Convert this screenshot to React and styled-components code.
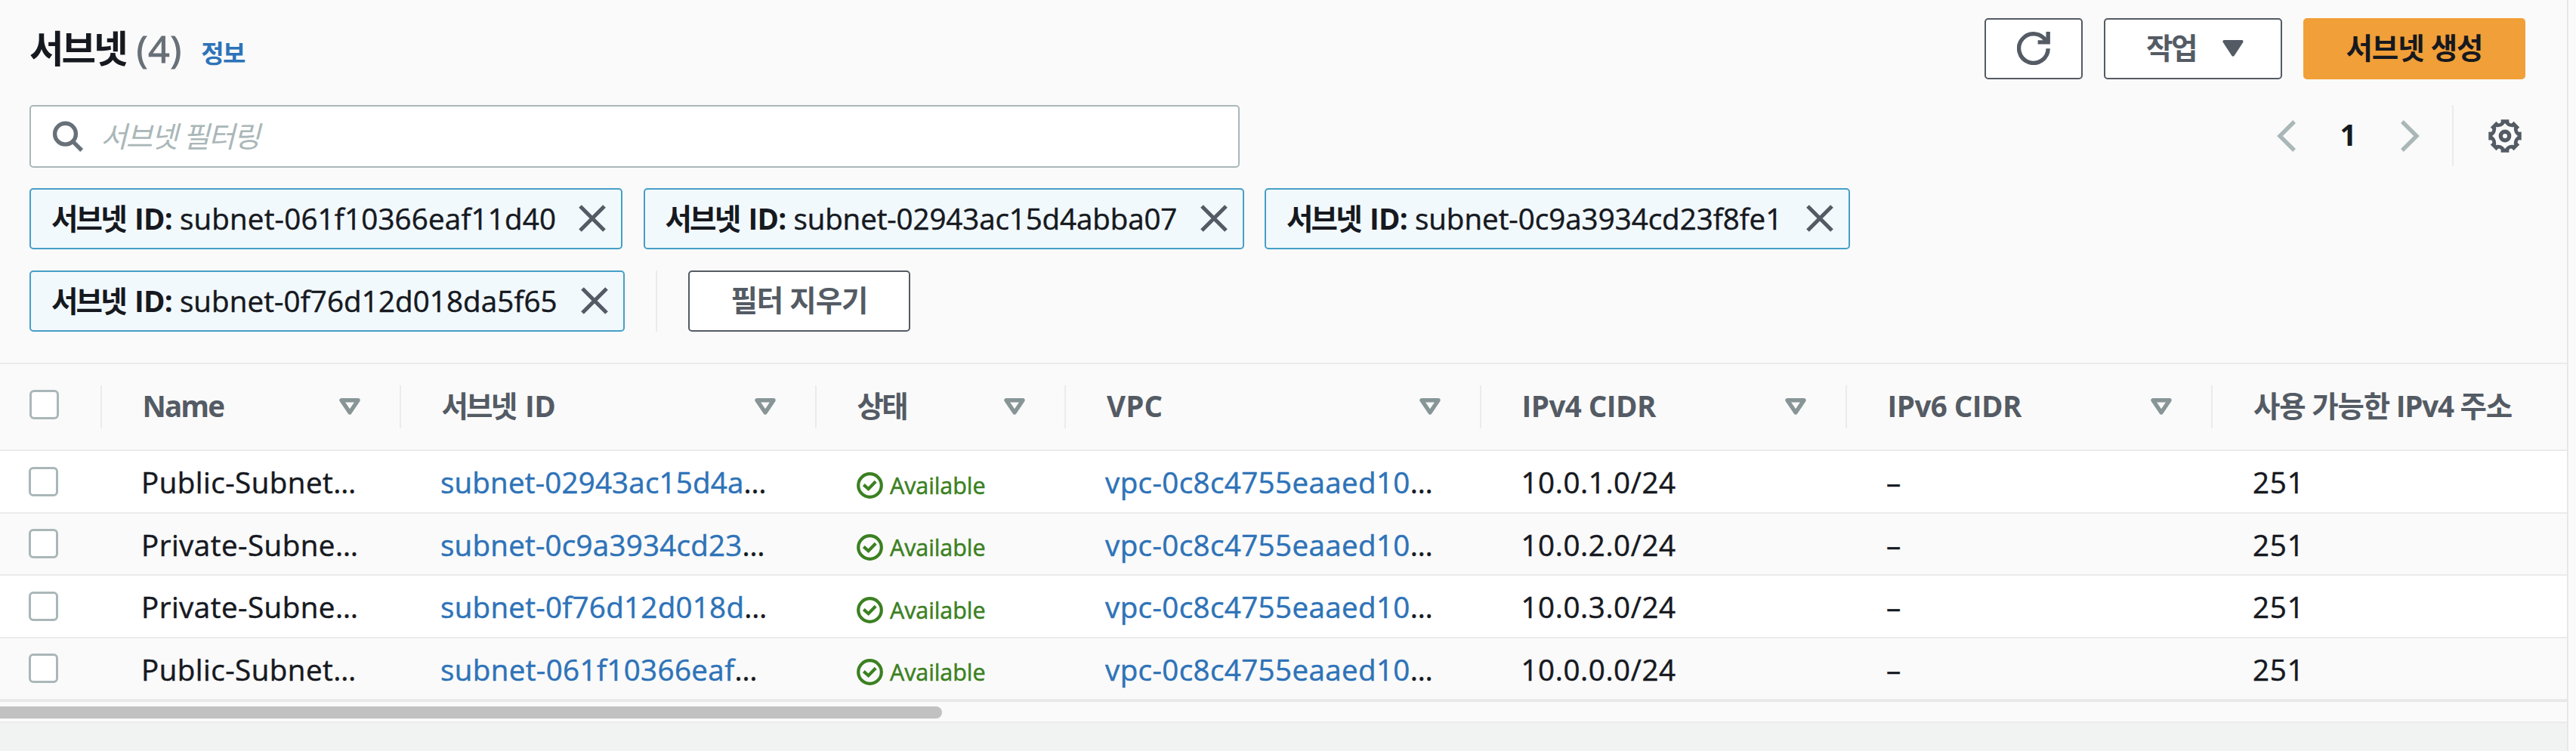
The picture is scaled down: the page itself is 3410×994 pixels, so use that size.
import React from 'react';
import styled, { createGlobalStyle } from 'styled-components';

const color = {
  ink: '#16191f',
  muted: '#545b64',
  count: '#687078',
  link: '#2e73b8',
  line: '#ebebeb',
  input: '#aab7b8',
  sort: '#879596',
  ok: '#3b8021',
  surface: '#fafafa',
};

const GlobalStyle = createGlobalStyle`
  *, *::before, *::after { box-sizing: border-box; }
  body {
    margin: 0;
    overflow: hidden;
    background: ${color.surface};
    color: ${color.ink};
    font: 38.5px/1 "Open Sans", "Noto Sans CJK KR", sans-serif;
  }
  svg { display: block; flex: none; }
  button, input { font: inherit; }
`;

const Page = styled.div`
  display: flex;
  flex-direction: column;
  width: 3400px;
  height: 994px;
  overflow: hidden;
  border-right: 2px solid #e7e7e7;
  white-space: nowrap;
`;

const Panel = styled.section`
  display: flex;
  flex-direction: column;
  flex: none;
  height: 957px;
  border-bottom: 2px solid ${color.line};
  background: ${color.surface};
`;

const Toolbar = styled.header`
  display: flex;
  flex-direction: column;
  height: 480px;
  padding: 24px 55px 0 39px;
`;

const TitleRow = styled.div`
  display: flex;
  justify-content: space-between;
  height: 81px;
`;

const TitleGroup = styled.div`
  display: flex;
  align-items: baseline;
  line-height: 81px;
`;

const Title = styled.h1`
  margin: 0;
  font-size: 49.5px;
  font-weight: 700;
  letter-spacing: -3px;
`;

const Count = styled.span`
  margin-left: 14px;
  color: ${color.count};
  font-size: 49.5px;
  letter-spacing: 1px;
  -webkit-text-stroke: 1.2px;
`;

const InfoLink = styled.a`
  margin-left: 25px;
  color: ${color.link};
  font-size: 33px;
  font-weight: 700;
  letter-spacing: -1.6px;
`;

const Actions = styled.div`
  display: flex;
  gap: 28px;
`;

const Button = styled.button`
  display: flex;
  align-items: center;
  justify-content: center;
  gap: 35px;
  width: ${(p) => p.$width}px;
  height: 81px;
  padding: 0 0 2px ${(p) => p.$indent ?? 0}px;
  border: 2px solid ${(p) => (p.$primary ? '#f19f38' : color.muted)};
  border-radius: 5px;
  background: ${(p) => (p.$primary ? '#f19f38' : '#fff')};
  color: ${(p) => (p.$primary ? color.ink : color.muted)};
  font-weight: 700;
  letter-spacing: ${(p) => p.$track ?? -1}px;
`;

const SearchRow = styled.div`
  display: flex;
  justify-content: space-between;
  height: 83px;
  margin-top: 34px;
`;

const SearchBox = styled.label`
  display: flex;
  align-items: center;
  gap: 22px;
  width: 1602px;
  height: 83px;
  padding-left: 28px;
  border: 2px solid ${color.input};
  border-radius: 5px;
  background: #fff;
`;

const SearchInput = styled.input`
  flex: 1;
  height: 75px;
  margin-top: -2px;
  padding: 0;
  border: 0;
  background: transparent;
  letter-spacing: -1.8px;
  &::placeholder {
    color: ${color.input};
    font-style: italic;
    opacity: 1;
  }
`;

const Pager = styled.nav`
  display: flex;
  align-items: center;
  height: 81px;
  padding-right: 5px;
`;

const PageNumber = styled.span`
  width: 139px;
  margin-top: -3px;
  text-align: center;
  font-weight: 700;
`;

const Divider = styled.i`
  width: 2px;
  height: 81px;
  margin: 0 ${(p) => p.$right}px 0 ${(p) => p.$left}px;
  background: ${color.line};
`;

const Filters = styled.div`
  display: flex;
  gap: 27.5px;
  margin-top: ${(p) => p.$top}px;
`;

const Chip = styled.div`
  display: flex;
  align-items: center;
  justify-content: space-between;
  width: ${(p) => p.$width}px;
  height: 81px;
  padding: 0 20px 1px 27px;
  border: 2px solid #469fc6;
  border-radius: 5px;
  background: #f2f9fd;
  letter-spacing: ${(p) => p.$track}px;
  -webkit-text-stroke: 0.5px;
`;

const ChipKey = styled.b`
  margin-right: 10px;
  letter-spacing: -0.8px;
  -webkit-text-stroke: 0;
`;

const Hangul = styled.span`
  margin-right: 3px;
  letter-spacing: -2.8px;
`;

const Table = styled.div`
  display: flex;
  flex-direction: column;
  overflow: hidden;
  border-bottom: 2px solid #e7e7e7;
`;

const columns =
  'grid-template-columns: 135px 396px 550px 330px 550px 484px 484px 520px;';

const HeadRow = styled.div`
  display: grid;
  ${columns}
  height: 117.5px;
  border-top: 2px solid ${color.line};
  border-bottom: 2px solid ${color.line};
`;

const HeadCell = styled.div`
  display: flex;
  align-items: center;
  justify-content: space-between;
  height: 57px;
  margin-top: 28px;
  padding: 0 ${(p) => p.$right ?? 52}px 0 ${(p) => p.$left ?? 53.5}px;
  border-right: 2px solid ${color.line};
  color: ${color.muted};
  font-weight: 700;
`;

const HeadLabel = styled.span`
  margin-top: -2px;
  letter-spacing: ${(p) => p.$track}px;
`;

const BodyRow = styled.div`
  display: grid;
  ${columns}
  height: 82.5px;
  border-bottom: 2px solid ${color.line};
  background: #fff;
  &:nth-child(odd) { background: ${color.surface}; }
`;

const Cell = styled.div`
  padding-left: ${(p) => p.$left ?? 52}px;
  line-height: 82px;
  letter-spacing: ${(p) => p.$track ?? 0}px;
  -webkit-text-stroke: 0.5px;
`;

const CheckCell = styled.div`
  display: flex;
  align-items: center;
  padding: 0 0 2px 38px;
`;

const Checkbox = styled.span`
  width: 39px;
  height: 39px;
  margin-top: ${(p) => p.$shift ?? 0}px;
  border: 3px solid ${color.input};
  border-radius: 6px;
  background: #fff;
`;

const Link = styled.a`
  color: ${color.link};
`;

const Status = styled.div`
  display: flex;
  align-items: center;
  gap: 9px;
  padding: 8px 0 0 53px;
  color: ${color.ok};
  font-size: 30.5px;
  letter-spacing: -0.1px;
  -webkit-text-stroke: 0.5px;
`;

const ScrollTrack = styled.div`
  height: 26px;
  padding-top: 6px;
`;

const ScrollThumb = styled.div`
  width: 1247px;
  height: 16px;
  border-radius: 0 8px 8px 0;
  background: #c1c1c1;
`;

const Footer = styled.div`
  flex: 1;
  background: #f1f3f3;
`;

const SearchIcon = () => (
  <svg width="42" height="42" viewBox="0 0 42 42" fill="none" stroke={color.count} strokeWidth="5.4">
    <circle cx="17.5" cy="17.2" r="13.9" />
    <path d="M27 26.8 39.2 39" />
  </svg>
);

const RefreshIcon = () => (
  <svg width="44" height="44" viewBox="0 0 44 44" fill="none" stroke={color.muted} strokeWidth="5.4">
    <path d="M41.2 22.3A19.3 19.3 0 1 1 38.6 12.4" />
    <path d="M41.2 0V13.9H27.6" />
  </svg>
);

const CaretIcon = () => (
  <svg width="28" height="22" viewBox="0 0 28 22" fill={color.muted} stroke={color.muted} strokeWidth="4" strokeLinejoin="round">
    <path d="M2.4 2H25.6L14 19.6Z" />
  </svg>
);

const SortIcon = () => (
  <svg width="28" height="22" viewBox="0 0 28 22" fill="none" stroke={color.sort} strokeWidth="5.4" strokeLinejoin="round">
    <path d="M3 2.7H25L14 19Z" />
  </svg>
);

const CloseIcon = () => (
  <svg width="36" height="36" viewBox="0 0 36 36" stroke={color.muted} strokeWidth="5.2">
    <path d="M2 2 34 34M34 2 2 34" />
  </svg>
);

const ChevronIcon = ({ next }) => (
  <svg width="25" height="42" viewBox="0 0 25 42" fill="none" stroke={color.input} strokeWidth="5.4">
    <path d={next ? 'M1.9 2 21 21 1.9 40' : 'M23.1 2 4 21 23.1 40'} />
  </svg>
);

const CheckIcon = () => (
  <svg width="35" height="35" viewBox="0 0 35 35" fill="none" stroke={color.ok} strokeWidth="4.2">
    <circle cx="17.5" cy="17.5" r="15.3" />
    <path d="M9.3 16.6 15.6 22.2 25.2 12.3" />
  </svg>
);

const polar = (r, deg) => {
  const a = (deg * Math.PI) / 180;
  return `${(22 + r * Math.sin(a)).toFixed(2)} ${(22 - r * Math.cos(a)).toFixed(2)}`;
};
const steps = [0, 45, 90, 135, 180, 225, 270, 315];
const gearRim =
  steps
    .map(
      (a, i) =>
        `${i ? 'L' : 'M'}${polar(19.3, a - 16)}L${polar(22.4, a - 14)}L${polar(22.4, a + 14)}L${polar(19.3, a + 16)}Q${polar(17.2, a + 22.5)} ${polar(19.3, a + 29)}`
    )
    .join('') + 'Z';
const gearHole =
  `M${polar(17, 0)}` + steps.map((a) => `Q${polar(11.6, a + 22.5)} ${polar(17, a + 45)}`).join('') + 'Z';

const GearIcon = () => (
  <svg width="44" height="44" viewBox="0 0 44 44" fill={color.muted}>
    <path fillRule="evenodd" d={gearRim + gearHole} />
    <circle cx="22" cy="22" r="5.7" fill="none" stroke={color.muted} strokeWidth="5.4" />
  </svg>
);

const heads = [
  { label: 'Name', track: -1.9 },
  { label: <><Hangul>서브넷</Hangul> ID</>, track: -0.4 },
  { label: '상태', track: -2.6 },
  { label: 'VPC', track: 0.2, left: 54 },
  { label: 'IPv4 CIDR', track: -0.5 },
  { label: 'IPv6 CIDR', track: -0.5 },
  { label: '사용 가능한 IPv4 주소', track: -1.2, left: 54, right: 21 },
];

const chips = [
  { id: 'subnet-061f10366eaf11d40', width: 785, track: 0.2 },
  { id: 'subnet-02943ac15d4abba07', width: 795, track: -0.1 },
  { id: 'subnet-0c9a3934cd23f8fe1', width: 775, track: 0 },
  { id: 'subnet-0f76d12d018da5f65', width: 788, track: 0.12 },
];

const rows = [
  { name: 'Public-Subnet', id: 'subnet-02943ac15d4a', cidr: '10.0.1.0/24', track: 0.2 },
  { name: 'Private-Subne', id: 'subnet-0c9a3934cd23', cidr: '10.0.2.0/24', track: 0.25 },
  { name: 'Private-Subne', id: 'subnet-0f76d12d018d', cidr: '10.0.3.0/24', track: 0.3 },
  { name: 'Public-Subnet', id: 'subnet-061f10366eaf', cidr: '10.0.0.0/24', track: 0.4 },
];

const vpc = 'vpc-0c8c4755eaaed10';

const FilterChip = ({ id, width, track }) => (
  <Chip $width={width} $track={track}>
    <span>
      <ChipKey><Hangul>서브넷</Hangul> ID:</ChipKey>
      {id}
    </span>
    <CloseIcon />
  </Chip>
);

export default function App() {
  return (
    <Page>
      <GlobalStyle />
      <Panel>
        <Toolbar>
          <TitleRow>
            <TitleGroup>
              <Title>서브넷</Title>
              <Count>(4)</Count>
              <InfoLink>정보</InfoLink>
            </TitleGroup>
            <Actions>
              <Button $width={130}><RefreshIcon /></Button>
              <Button $width={236} $indent={5} $track={-2.5}>작업<CaretIcon /></Button>
              <Button $width={294} $primary>서브넷 생성</Button>
            </Actions>
          </TitleRow>
          <SearchRow>
            <SearchBox>
              <SearchIcon />
              <SearchInput placeholder="서브넷 필터링" />
            </SearchBox>
            <Pager>
              <ChevronIcon />
              <PageNumber>1</PageNumber>
              <ChevronIcon next />
              <Divider $left={43} $right={46} />
              <GearIcon />
            </Pager>
          </SearchRow>
          <Filters $top={27}>
            {chips.slice(0, 3).map((c) => <FilterChip key={c.id} {...c} />)}
          </Filters>
          <Filters $top={28}>
            <FilterChip {...chips[3]} />
            <Divider $left={13.5} $right={13.5} />
            <Button $width={294}>필터 지우기</Button>
          </Filters>
        </Toolbar>
        <Table>
          <HeadRow>
            <HeadCell $left={39} $right={0}><Checkbox $shift={-5} /></HeadCell>
            {heads.map((h, i) => (
              <HeadCell key={i} $left={h.left} $right={h.right}>
                <HeadLabel $track={h.track}>{h.label}</HeadLabel>
                <SortIcon />
              </HeadCell>
            ))}
          </HeadRow>
          {rows.map((r) => (
            <BodyRow key={r.id}>
              <CheckCell><Checkbox /></CheckCell>
              <Cell $track={0.5}>{r.name}…</Cell>
              <Cell $track={r.track}><Link>{r.id}</Link>…</Cell>
              <Status><CheckIcon />Available</Status>
              <Cell $track={0.4}><Link>{vpc}</Link>…</Cell>
              <Cell $track={0.6} $left={52.5}>{r.cidr}</Cell>
              <Cell>–</Cell>
              <Cell $track={0.8} $left={53}>251</Cell>
            </BodyRow>
          ))}
        </Table>
        <ScrollTrack><ScrollThumb /></ScrollTrack>
      </Panel>
      <Footer />
    </Page>
  );
}
